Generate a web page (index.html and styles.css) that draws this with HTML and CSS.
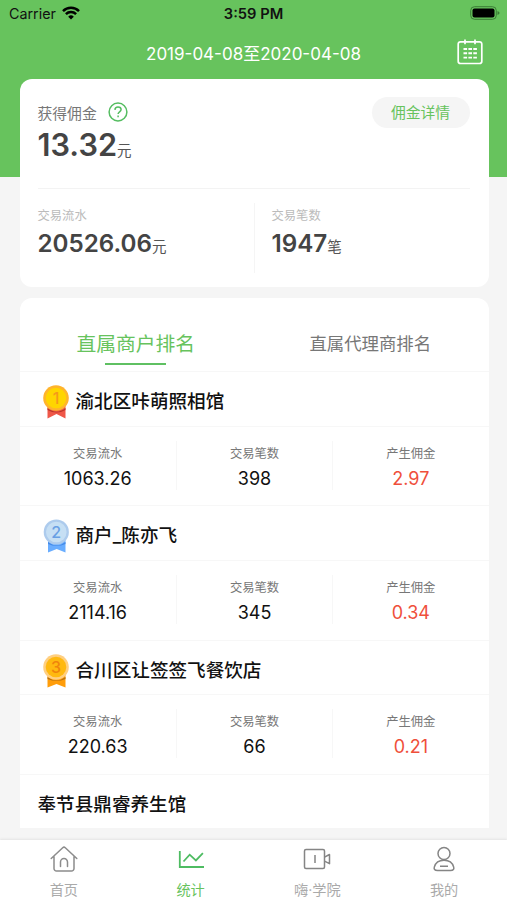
FILE: index.html
```html
<!DOCTYPE html>
<html lang="zh-CN">
<head>
<meta charset="utf-8">
<meta name="viewport" content="width=device-width, initial-scale=1">
<title>统计</title>
<link rel="stylesheet" href="styles.css">
</head>
<body>
<div class="screen">
  <div class="status">
    <div class="carrier"><span>Carrier</span>
      <svg width="18" height="14" viewBox="0 0 18 14" fill="none" stroke="#000" stroke-width="2.5"><path d="M1 5.1a11.3 11.3 0 0 1 16 0M3.9 8.1a7.2 7.2 0 0 1 10.2 0"/><path d="M9 13.6 6.2 10.7a4 4 0 0 1 5.6 0z" fill="#000" stroke="none"/></svg>
    </div>
    <div class="clock">3:59 PM</div>
    <svg class="battery" width="30" height="14" viewBox="0 0 30 14"><rect x=".7" y=".7" width="25.600" height="12.600" rx="3.800" fill="none" stroke="#3b7d36"/><rect x="2.500" y="2.500" width="22" height="9" rx="2"/><path d="M27.500 5v4c1.300-.6 2-1.200 2-2s-.7-1.400-2-2z" fill="#3b7d36"/></svg>
  </div>
  <header class="nav">
    <div class="range">2019-04-08至2020-04-08</div>
    <svg class="calendar" width="26" height="26" viewBox="0 0 26 26" fill="none" stroke="#fff" stroke-width="1.700"><path d="M3.500 2.800h19A2.300 2.300 0 0 1 24.800 5v17.200a2.300 2.300 0 0 1-2.300 2.300h-19a2.300 2.300 0 0 1-2.300-2.300V5a2.300 2.300 0 0 1 2.300-2.200zM8 .4v4.800M18 .4v4.800"/><path d="M6.500 10h3.600M11.400 10H15M16.300 10h3.600M6.500 14.300h3.600M11.400 14.300H15M16.300 14.300h3.600M6.500 18.600h3.600M11.400 18.600H15M16.300 18.600h3.600" stroke-width="1.900"/></svg>
  </header>

  <section class="card summary">
    <div class="earned">
      <div>
        <div class="earned-label">获得佣金
          <svg width="20" height="20" viewBox="0 0 20 20" fill="none" stroke="#55bd61" stroke-width="1.500"><circle cx="10" cy="10" r="8.900"/><path d="M6.900 7.900C7 6 8.300 5 10 5s3.100 1 3.100 2.600c0 2.200-3 2.400-3 4.500M10.100 13.600v1.700"/></svg>
        </div>
        <div class="amount big"><b>13.32</b>元</div>
      </div>
      <div class="detail">佣金详情</div>
    </div>
    <div class="totals">
      <div class="total"><div class="total-label">交易流水</div><div class="amount"><b>20526.06</b>元</div></div>
      <div class="total"><div class="total-label">交易笔数</div><div class="amount"><b>1947</b>笔</div></div>
    </div>
  </section>

  <section class="card ranking">
    <div class="tabs"><div class="tab active">直属商户排名</div><div class="tab">直属代理商排名</div></div>

    <div class="name">
      <svg class="medal" width="26" height="34" viewBox="0 0 26 34"><path d="M4.500 21h18v12.500l-9-4.500-9 4.500z" fill="#ef5748"/><path d="M4.500 23q9 7.500 18 0v2q-9 5-18 0z" fill="#b93629"/><circle cx="13" cy="13" r="12.800" fill="#ffb42c"/><circle cx="13" cy="13" r="10.300" fill="#ffd500"/><text x="13" y="18.500" fill="#f59b1a">1</text></svg>
      <span>渝北区咔萌照相馆</span></div>
    <div class="stats">
      <div class="stat"><span>交易流水</span><strong>1063.26</strong></div>
      <div class="stat"><span>交易笔数</span><strong>398</strong></div>
      <div class="stat"><span>产生佣金</span><strong class="red">2.97</strong></div>
    </div>

    <div class="name">
      <svg class="medal" width="26" height="34" viewBox="0 0 26 34"><path d="M5 21h17.500v12.500L13.700 30 5 33.500z" fill="#69adff"/><path d="M5 23q9 7 17.500 0v2q-9 4-17.500 0z" fill="#4589e6"/><circle cx="13.300" cy="13" r="12.600" fill="#adcbed"/><circle cx="13.300" cy="13" r="10.300" fill="#c6dff4"/><text x="13.300" y="18.500" fill="#699fe4">2</text></svg>
      <span>商户_陈亦飞</span></div>
    <div class="stats">
      <div class="stat"><span>交易流水</span><strong>2114.16</strong></div>
      <div class="stat"><span>交易笔数</span><strong>345</strong></div>
      <div class="stat"><span>产生佣金</span><strong class="red">0.34</strong></div>
    </div>

    <div class="name">
      <svg class="medal" width="26" height="34" viewBox="0 0 26 34"><path d="M4.500 21h18v12.500L13.500 30l-9 3.500z" fill="#ff9d0a"/><path d="M4.500 23q9 7 18 0v2q-9 4-18 0z" fill="#b87010"/><circle cx="13" cy="13" r="12.800" fill="#ffcf81"/><circle cx="13" cy="13" r="10.300" fill="#ffb910"/><text x="13" y="18.500" fill="#ef850c">3</text></svg>
      <span>合川区让签签飞餐饮店</span></div>
    <div class="stats">
      <div class="stat"><span>交易流水</span><strong>220.63</strong></div>
      <div class="stat"><span>交易笔数</span><strong>66</strong></div>
      <div class="stat"><span>产生佣金</span><strong class="red">0.21</strong></div>
    </div>

    <div class="name plain">奉节县鼎睿养生馆</div>
  </section>

  <nav class="tabbar">
    <div class="item"><svg width="30" height="28" viewBox="0 0 30 28" fill="none" stroke="#8c8c8c" stroke-width="1.500" stroke-linejoin="round" stroke-linecap="round"><path d="M2.200 13.500 13.700 2.700a2 2 0 0 1 2.600 0l11.500 10.800M5 11.500v12a2.500 2.500 0 0 0 2.500 2.500h15a2.500 2.500 0 0 0 2.500-2.500v-12M11.500 21.500V17a3.500 3.500 0 0 1 7 0v4.500"/></svg><span>首页</span></div>
    <div class="item on"><svg width="30" height="28" viewBox="0 0 30 28" fill="none" stroke="#4ebc62" stroke-width="1.800"><path d="M3.800 6v16h24.200M7.500 16.500l6.200-6.800 6.200 5.700 7-7.200"/></svg><span>统计</span></div>
    <div class="item"><svg width="30" height="28" viewBox="0 0 30 28" fill="none" stroke="#858585" stroke-width="1.500" stroke-linejoin="round"><rect x="2.500" y="4.500" width="20" height="19" rx="1.500"/><path d="M13 10v8M22.500 12.200l5-2.700v9.200l-5-2.500"/></svg><span>嗨·学院</span></div>
    <div class="item"><svg width="30" height="28" viewBox="0 0 30 28" fill="none" stroke="#858585" stroke-width="1.500"><circle cx="15" cy="8.500" r="6"/><path d="M8.500 25.500h13c3 0 3.700-1.500 3.200-3.400C23.500 17.800 19.700 15.300 15 15.300s-8.500 2.500-9.700 6.800c-.5 1.900.2 3.400 3.200 3.400zM11 21.300h8"/></svg><span>我的</span></div>
  </nav>
</div>
</body>
</html>
```
FILE: styles.css
```css
* { box-sizing: border-box; }
body {
  margin: 0;
  font-family: Inter, "Noto Sans CJK SC", sans-serif;
  color: #111;
}
svg { display: block; flex: none; }
.screen {
  height: 900px;
  display: flex;
  flex-direction: column;
  overflow: hidden;
  background: linear-gradient(#67c35d 177px, #f5f5f5 177px);
}
.status {
  height: 28px;
  flex: none;
  display: grid;
  grid-template-columns: 1fr auto 1fr;
  align-items: center;
  padding: 0 7px 0 9px;
  line-height: 28px;
}
.carrier { display: flex; align-items: center; gap: 6px; font-size: 14.3px; }
.carrier svg { margin-top: -2px; }
.clock { font-size: 14.7px; font-weight: 600; margin-left: -2px; }
.battery { justify-self: end; margin-top: -2px; }
.nav {
  height: 51px;
  flex: none;
  display: grid;
  grid-template-columns: 1fr auto 1fr;
  padding: 0 24px;
  color: #fff;
}
.range { grid-column: 2; font-size: 17px; line-height: 53px; }
.calendar { justify-self: end; margin-top: 11px; }
.card { margin: 0 18.5px 0 19.5px; background: #fff; flex: none; }
.summary { height: 208px; border-radius: 12px; padding: 0 19px 0 18px; }
.earned {
  display: flex;
  justify-content: space-between;
  align-items: flex-start;
  height: 110px;
  padding-top: 18px;
  border-bottom: 1px solid #f3f3f3;
}
.earned-label {
  display: flex;
  align-items: center;
  gap: 11px;
  height: 30px;
  font-size: 14.8px;
  color: #777;
}
.amount { font-size: 14.5px; line-height: 36px; color: #555; white-space: nowrap; }
.amount b { font-size: 24.2px; font-weight: 600; color: #444; }
.amount.big b { font-size: 30.7px; }
.detail {
  width: 98px;
  height: 31px;
  border-radius: 16px;
  background: #f5f5f5;
  color: #67c35d;
  font-size: 14.8px;
  line-height: 32px;
  text-align: center;
}
.totals { display: grid; grid-template-columns: 216px 1fr; padding-top: 14px; }
.total { height: 70px; padding-top: 2px; }
.total + .total { border-left: 1px solid #f5f5f5; padding-left: 17px; }
.total-label { font-size: 12.3px; line-height: 21px; color: #bbb; }
.ranking { height: 530px; margin-top: 11px; border-radius: 12px 12px 0 0; }
.tabs {
  display: grid;
  grid-template-columns: 1fr 1fr;
  height: 74px;
  padding-top: 17px;
  border-bottom: 1px solid #f7f7f7;
}
.tab { font-size: 17.4px; line-height: 57px; text-align: center; color: #777; margin-left: -2px; }
.tab.active { font-size: 19.8px; line-height: 59px; color: #67c35d; }
.tab.active::after {
  content: "";
  display: block;
  width: 61px;
  height: 2px;
  margin: -11px auto 0;
  background: #5fc062;
}
.name {
  display: flex;
  align-items: center;
  gap: 7px;
  height: 54.7px;
  padding-left: 23px;
  padding-top: 1px;
  border-bottom: 1px solid #f7f7f7;
  font-size: 18.6px;
  font-weight: 500;
}
.name.plain { padding-left: 18px; border: 0; }
.medal { margin-top: 5px; }
.medal text {
  font: 500 16px Inter, sans-serif;
  text-anchor: middle;
}
.stats {
  display: grid;
  grid-template-columns: repeat(3, 1fr);
  height: 79.7px;
  padding-top: 14px;
  border-bottom: 1px solid #f7f7f7;
}
.stat { height: 49px; display: flex; flex-direction: column; align-items: center; padding-top: 1px; }
.stat + .stat { border-left: 1px solid #f7f7f7; }
.stat span { font-size: 12.3px; line-height: 24px; color: #777; }
.stat strong { font-size: 18px; line-height: 26px; font-weight: 400; }
.stat .red { color: #ef4f3b; }
.tabbar {
  margin-top: auto;
  height: 60px;
  flex: none;
  display: grid;
  grid-template-columns: repeat(4, 1fr);
  background: #fff;
  box-shadow: 0 -1px 2px #e3e3e3;
}
.item { display: flex; flex-direction: column; align-items: center; padding: 5px 0 0 1px; color: #aaa; font-size: 14.2px; }
.item span { line-height: 34px; }
.item.on { color: #67c35d; }
```
